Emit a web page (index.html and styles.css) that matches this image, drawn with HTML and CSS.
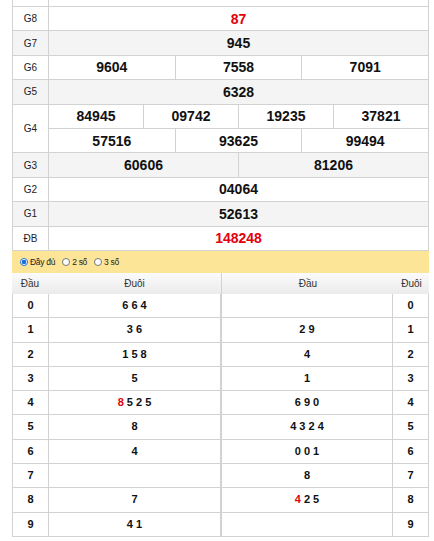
FILE: index.html
```html
<!DOCTYPE html>
<html lang="vi">
<head>
<meta charset="utf-8">
<title>KQXS</title>
<link rel="stylesheet" href="styles.css">
</head>
<body>
<div class="kq">
  <div class="row top"><div class="lbl"></div><div class="val"></div></div>
  <div class="row"><div class="lbl">G8</div><div class="val"><span class="cell red">87</span></div></div>
  <div class="row alt"><div class="lbl">G7</div><div class="val"><span class="cell">945</span></div></div>
  <div class="row"><div class="lbl">G6</div><div class="val"><span class="cell">9604</span><span class="cell">7558</span><span class="cell">7091</span></div></div>
  <div class="row alt"><div class="lbl">G5</div><div class="val"><span class="cell">6328</span></div></div>
  <div class="row g4"><div class="lbl">G4</div>
    <div class="val stack">
      <div class="sub"><span class="cell">84945</span><span class="cell">09742</span><span class="cell">19235</span><span class="cell">37821</span></div>
      <div class="sub"><span class="cell">57516</span><span class="cell">93625</span><span class="cell">99494</span></div>
    </div>
  </div>
  <div class="row alt"><div class="lbl">G3</div><div class="val"><span class="cell">60606</span><span class="cell">81206</span></div></div>
  <div class="row"><div class="lbl">G2</div><div class="val"><span class="cell">04064</span></div></div>
  <div class="row alt"><div class="lbl">G1</div><div class="val"><span class="cell">52613</span></div></div>
  <div class="row"><div class="lbl">ĐB</div><div class="val"><span class="cell red">148248</span></div></div>
</div>

<div class="bar">
  <label class="opt"><input type="radio" name="mode" checked><span>Đầy đủ</span></label>
  <label class="opt"><input type="radio" name="mode"><span>2 số</span></label>
  <label class="opt"><input type="radio" name="mode"><span>3 số</span></label>
</div>

<div class="loto">
  <div class="lt left">
    <div class="lhead"><span class="c-key">Đầu</span><span class="c-val">Đuôi</span></div>
    <div class="lrow"><span class="c-key">0</span><span class="c-val">6 6 4</span></div>
    <div class="lrow"><span class="c-key">1</span><span class="c-val">3 6</span></div>
    <div class="lrow"><span class="c-key">2</span><span class="c-val">1 5 8</span></div>
    <div class="lrow"><span class="c-key">3</span><span class="c-val">5</span></div>
    <div class="lrow"><span class="c-key">4</span><span class="c-val"><b class="red">8</b> 5 2 5</span></div>
    <div class="lrow"><span class="c-key">5</span><span class="c-val">8</span></div>
    <div class="lrow"><span class="c-key">6</span><span class="c-val">4</span></div>
    <div class="lrow"><span class="c-key">7</span><span class="c-val"></span></div>
    <div class="lrow"><span class="c-key">8</span><span class="c-val">7</span></div>
    <div class="lrow"><span class="c-key">9</span><span class="c-val">4 1</span></div>
  </div>
  <div class="lt right">
    <div class="lhead"><span class="c-val">Đầu</span><span class="c-key">Đuôi</span></div>
    <div class="lrow"><span class="c-val"></span><span class="c-key">0</span></div>
    <div class="lrow"><span class="c-val">2 9</span><span class="c-key">1</span></div>
    <div class="lrow"><span class="c-val">4</span><span class="c-key">2</span></div>
    <div class="lrow"><span class="c-val">1</span><span class="c-key">3</span></div>
    <div class="lrow"><span class="c-val">6 9 0</span><span class="c-key">4</span></div>
    <div class="lrow"><span class="c-val">4 3 2 4</span><span class="c-key">5</span></div>
    <div class="lrow"><span class="c-val">0 0 1</span><span class="c-key">6</span></div>
    <div class="lrow"><span class="c-val">8</span><span class="c-key">7</span></div>
    <div class="lrow"><span class="c-val"><b class="red">4</b> 2 5</span><span class="c-key">8</span></div>
    <div class="lrow"><span class="c-val"></span><span class="c-key">9</span></div>
  </div>
</div>
</body>
</html>
```

FILE: styles.css
```css
html, body {
  margin: 0;
  padding: 0;
  background: #fff;
}
body {
  font-family: "Liberation Sans", Arial, sans-serif;
  color: #111;
}

/* ---------- results table ---------- */
.kq {
  margin-left: 12px;
  width: 417px;
  box-sizing: border-box;
  border-left: 1px solid #d2d2d2;
  border-right: 1px solid #d2d2d2;
}
.row {
  display: flex;
  height: 24.4px;
  box-sizing: border-box;
  border-bottom: 1px solid #d2d2d2;
  background: #fff;
}
.row.top { height: 7px; }
.row.alt { background: #f4f4f4; }
.row.g4 { height: 48.8px; }
.lbl {
  width: 36px;
  flex: none;
  box-sizing: border-box;
  border-right: 1px solid #d2d2d2;
  display: flex;
  align-items: center;
  justify-content: center;
  font-size: 10px;
  color: #222;
}
.val {
  flex: 1;
  display: flex;
}
.val.stack { flex-direction: column; }
.sub {
  flex: 1;
  display: flex;
}
.sub + .sub { border-top: 1px solid #d2d2d2; }
.cell {
  flex: 1 1 0;
  display: flex;
  align-items: center;
  justify-content: center;
  font-size: 14px;
  font-weight: bold;
  color: #111;
}
.cell + .cell { border-left: 1px solid #d2d2d2; }
.red { color: #e3000b; }

/* ---------- option bar ---------- */
.bar {
  margin-left: 12px;
  width: 417px;
  height: 22px;
  box-sizing: border-box;
  background: #fde597;
  display: flex;
  align-items: center;
  padding-left: 8px;
  gap: 7px;
}
.opt {
  display: flex;
  align-items: center;
  gap: 2px;
  font-size: 8.5px;
  letter-spacing: -0.3px;
  color: #222;
}
.opt input {
  appearance: none;
  -webkit-appearance: none;
  margin: 0;
  width: 8px;
  height: 8px;
  border-radius: 50%;
  border: 1px solid #777;
  background: #fff;
  box-sizing: border-box;
}
.opt input:checked {
  border-color: #1a6fe0;
  background: radial-gradient(circle, #1a6fe0 0 2px, #fff 2.5px);
}

/* ---------- loto table ---------- */
.loto {
  margin-left: 12px;
  width: 417px;
  display: flex;
}
.lt {
  display: flex;
  flex-direction: column;
}
.lt.left { width: 209px; }
.lt.right { width: 208px; }
.lhead {
  display: flex;
  height: 21px;
  background: linear-gradient(#fbfbfb, #ebebeb);
  font-size: 10px;
  color: #333;
}
.lt.right .lhead { border-left: 1px solid #d2d2d2; }
.lrow {
  display: flex;
  height: 24.3px;
  box-sizing: border-box;
  border-bottom: 1px solid #d2d2d2;
  border-left: 1px solid #d2d2d2;
  border-right: 1px solid #d2d2d2;
  font-size: 11px;
  font-weight: bold;
  color: #111;
}
.lhead span {
  display: block;
  text-align: center;
  line-height: 21px;
}
.lrow > span {
  display: block;
  text-align: center;
  line-height: 23.3px;
}
.c-key {
  width: 35px;
  flex: none;
}
.c-val { flex: 1; }
.lt.left .lrow .c-key { border-right: 1px solid #d2d2d2; }
.lt.right .lrow .c-val { border-right: 1px solid #d2d2d2; }
.lt.left .lhead .c-key { width: 36px; }
.lt.right .lhead .c-key { width: 35px; }
.lrow b { font-weight: bold; }
```
